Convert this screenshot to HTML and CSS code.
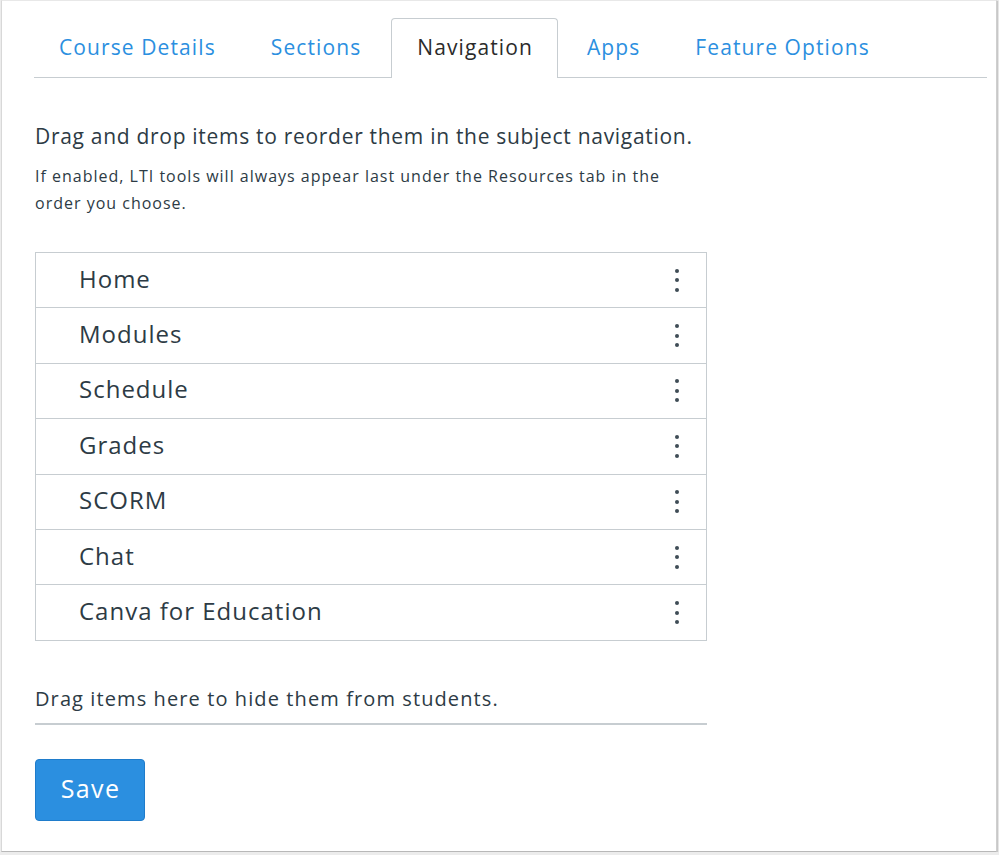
FILE: index.html
```html
<!DOCTYPE html>
<html lang="en">
<head>
<meta charset="utf-8">
<title>Navigation</title>
<link rel="stylesheet" href="styles.css">
</head>
<body>
<div class="window">
  <ul class="tabs">
    <li class="tab">Course Details</li>
    <li class="tab">Sections</li>
    <li class="tab active">Navigation</li>
    <li class="tab">Apps</li>
    <li class="tab">Feature Options</li>
  </ul>
  <div class="content">
    <p class="lead">Drag and drop items to reorder them in the subject navigation.</p>
    <p class="note">If enabled, LTI tools will always appear last under the Resources tab in the order you choose.</p>
    <ul class="nav-list">
      <li class="nav-item"><span class="label">Home</span><span class="kebab"><i></i><i></i><i></i></span></li>
      <li class="nav-item"><span class="label">Modules</span><span class="kebab"><i></i><i></i><i></i></span></li>
      <li class="nav-item"><span class="label">Schedule</span><span class="kebab"><i></i><i></i><i></i></span></li>
      <li class="nav-item"><span class="label">Grades</span><span class="kebab"><i></i><i></i><i></i></span></li>
      <li class="nav-item"><span class="label">SCORM</span><span class="kebab"><i></i><i></i><i></i></span></li>
      <li class="nav-item"><span class="label">Chat</span><span class="kebab"><i></i><i></i><i></i></span></li>
      <li class="nav-item"><span class="label">Canva for Education</span><span class="kebab"><i></i><i></i><i></i></span></li>
    </ul>
    <div class="hidden-zone">Drag items here to hide them from students.</div>
    <button class="save" type="button">Save</button>
  </div>
</div>
</body>
</html>
```
FILE: styles.css
```css
html, body {
  margin: 0;
  padding: 0;
  background: #ececec;
}
body {
  font-family: "Open Sans", "Noto Sans", "Liberation Sans", sans-serif;
  color: #2d3b45;
}
.window {
  box-sizing: border-box;
  width: 996px;
  height: 852px;
  margin-left: 1px;
  background: #fff;
  border-top: 1px solid #e8e8e8;
  border-left: 1px solid #d8d8d8;
  border-right: 1px solid #cfcfcf;
  border-bottom: 1px solid #b8b8b8;
  box-shadow: 1px 1px 1px #c8c8c8;
  padding: 17px 9px 0 32px;
}
.tabs {
  list-style: none;
  margin: 0;
  padding: 0;
  display: flex;
  gap: 4px;
  height: 59px;
  border-bottom: 1px solid #c7cdd1;
}
.tab {
  box-sizing: border-box;
  height: 60px;
  padding: 0 25px 4px 24px;
  display: flex;
  align-items: center;
  font-size: 21px;
  letter-spacing: 1.1px;
  color: #2b8fe0;
  border: 1px solid transparent;
  border-bottom: none;
  border-radius: 4px 4px 0 0;
}
.tab.active {
  color: #2b2b2b;
  background: #fff;
  border-color: #c7cdd1;
  padding-left: 25px;
  padding-right: 24px;
}
.content {
  padding: 0 0 0 1px;
  width: 672px;
}
.lead {
  margin: 43px 0 0;
  font-size: 21px;
  line-height: 30px;
  letter-spacing: 0.7px;
}
.note {
  margin: 12px 0 0;
  font-size: 16px;
  line-height: 27px;
  letter-spacing: 1px;
  padding-right: 10px;
}
.nav-list {
  list-style: none;
  margin: 35px 0 0;
  padding: 0;
  border: 1px solid #c7cdd1;
}
.nav-item {
  box-sizing: border-box;
  height: 55.4px;
  display: flex;
  align-items: center;
  justify-content: space-between;
  padding: 0 27px 0 43px;
  font-size: 24px;
  letter-spacing: 1px;
  border-top: 1px solid #c7cdd1;
}
.nav-item:first-child {
  border-top: none;
  height: 54.4px;
}
.label {
  padding-bottom: 4px;
}
.kebab {
  display: flex;
  flex-direction: column;
  gap: 5.5px;
}
.kebab i {
  display: block;
  width: 4px;
  height: 4px;
  border-radius: 50%;
  background: #3f4c56;
}
.hidden-zone {
  margin-top: 44px;
  font-size: 20px;
  line-height: 28px;
  letter-spacing: 1.1px;
  padding-bottom: 10px;
  border-bottom: 2px solid #c7cdd1;
}
.save {
  margin-top: 34px;
  width: 110px;
  height: 62px;
  background: #2b8fe0;
  color: #fff;
  border: 1px solid #1f7ccb;
  border-radius: 4px;
  font-family: inherit;
  font-size: 25px;
  letter-spacing: 1.4px;
  padding: 0 0 4px 1px;
  cursor: pointer;
}
```
